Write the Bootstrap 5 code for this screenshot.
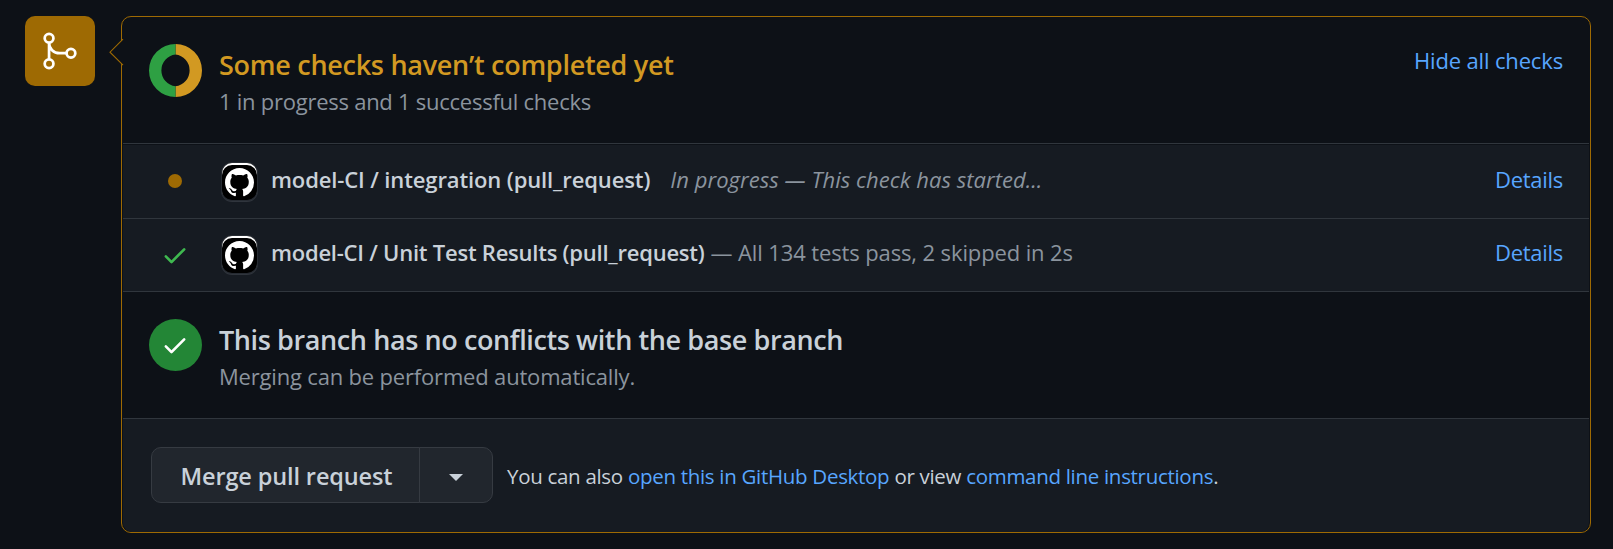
<!DOCTYPE html>
<html lang="en">
<head>
<meta charset="utf-8">
<meta name="viewport" content="width=device-width, initial-scale=1">
<title>Merge status</title>
<link href="https://cdn.jsdelivr.net/npm/bootstrap@5.3.0/dist/css/bootstrap.min.css" rel="stylesheet">
<style>
body{background:#0d1117;color:#c9d1d9;font-family:"Open Sans",sans-serif;font-size:22px;line-height:34px;white-space:nowrap;overflow:hidden}
a{color:#58a6ff;text-decoration:none}
svg{display:block;flex:none}
.timeline{padding:16px 22px 16px 25px;gap:26px}
.merge-badge{width:70px;height:70px;border-radius:10px;background:#9e6a03;padding:14px}
.merge-box{height:517px;border:1px solid #9e6a03;border-radius:10px;padding:0 1px 1px}
.pointer{position:absolute;left:-13px;top:21px}
.section-top{height:127px;border-bottom:1px solid #30363d;margin-bottom:1px;padding:26px 26px 0 26px}
.section-branch{height:127px;border-top:1px solid #30363d;padding:27px 26px 0 26px}
.section-foot{height:114px;border-top:1px solid #30363d;background:#161b22;border-radius:0 0 9px 9px;padding:28px 26px 0 28px}
.status-title{font-size:27px;line-height:38px;font-weight:600;margin:0}
.pending{color:#d29922}
.muted{color:#8b949e}
.status-text{margin-left:17px}
.ok-circle{width:53px;height:52px;background:#238636;border-radius:50%;padding:12px}
.check-row{background:#161b22;padding:17px 26px 0 25px;height:73px}
.check-row + .check-row{border-top:1px solid #30363d;padding-top:16px}
.state{width:53px;height:37px}
.dot{width:14px;height:14px;border-radius:50%;background:#9e6a03}
.avatar{width:35px;height:37px;margin:1px 14px 0 21px;border-radius:10px;background:#000;box-shadow:inset 0 2px 0 #fff,0 0 0 1px #262b32,0 1px 0 1px #30353d;padding:5px 3px 0}
.check-name{font-weight:600}
.merge-btn .btn{--bs-btn-color:#c9d1d9;--bs-btn-bg:#21262d;--bs-btn-border-color:#363b42;--bs-btn-hover-bg:#30363d;--bs-btn-hover-color:#c9d1d9;height:56px;border-radius:10px}
.merge-btn .main{width:269px;font-size:23.5px;line-height:34px;font-weight:600;letter-spacing:-.128px;padding:11px 0 9px 2px;border-top-right-radius:0;border-bottom-right-radius:0}
.merge-btn .more{width:74px;padding:4px 0 0;border-top-left-radius:0;border-bottom-left-radius:0}
.hint{font-size:20.5px;margin:1px 0 0 14px;letter-spacing:-.3px}
</style>
</head>
<body>
<main class="timeline d-flex align-items-start">
  <div class="merge-badge flex-shrink-0">
    <svg width="42" height="42" viewBox="0 0 24 24" fill="none" stroke="#fff" stroke-width="1.55"><circle cx="5.75" cy="4.75" r="2.5"/><circle cx="5.75" cy="19.25" r="2.5"/><circle cx="18.25" cy="13.25" r="2.5"/><path d="M5.75 7.25v9.5M5.75 7.25c0 3.5 2.6 6 6 6h4"/></svg>
  </div>
  <section class="merge-box position-relative flex-grow-1">
    <svg class="pointer" width="15" height="28" viewBox="0 0 15 28"><path d="M14 1.2 1 14.2l13 13z" fill="#0d1117"/><path d="M14 1.2 1 14.2l13 13" fill="none" stroke="#9e6a03" stroke-width="1.1"/></svg>

    <div class="section-top d-flex align-items-start">
      <svg width="53" height="54" viewBox="0 0 53 54"><path d="M26.5 1a26.5 26.5 0 0 1 0 53V43.2a15.9 15.9 0 0 0 0-31.6z" fill="#d29922"/><path d="M26.5 1a26.5 26.5 0 0 0 0 53V43.2a15.9 15.9 0 0 1 0-31.6z" fill="#2ea043"/></svg>
      <div class="status-text" style="padding-top:3px">
        <h3 class="status-title pending" style="letter-spacing:-.28px">Some checks haven’t completed yet</h3>
        <div class="muted" style="letter-spacing:-.254px">1 in progress and 1 successful checks</div>
      </div>
      <a href="#" class="ms-auto" style="letter-spacing:-.155px">Hide all checks</a>
    </div>

    <div class="check-row d-flex align-items-start">
      <div class="state d-flex align-items-center justify-content-center"><span class="dot"></span></div>
      <div class="avatar"><svg width="29" height="29" viewBox="0 0 16 16"><path fill="#fff" d="M8 0C3.58 0 0 3.58 0 8c0 3.54 2.29 6.53 5.47 7.59.4.07.55-.17.55-.38 0-.19-.01-.82-.01-1.49-2.01.37-2.53-.49-2.69-.94-.09-.23-.48-.94-.82-1.13-.28-.15-.68-.52-.01-.53.63-.01 1.08.58 1.23.82.72 1.21 1.87.87 2.33.66.07-.52.28-.87.51-1.07-1.78-.2-3.64-.89-3.64-3.95 0-.87.31-1.59.82-2.15-.08-.2-.36-1.02.08-2.12 0 0 .67-.21 2.2.82.64-.18 1.32-.27 2-.27s1.36.09 2 .27c1.53-1.04 2.2-.82 2.2-.82.44 1.1.16 1.92.08 2.12.51.56.82 1.27.82 2.15 0 3.07-1.87 3.75-3.65 3.95.29.25.54.73.54 1.48 0 1.07-.01 1.93-.01 2.2 0 .21.15.46.55.38A8.01 8.01 0 0 0 16 8c0-4.42-3.58-8-8-8z"/></svg></div>
      <span class="check-name" style="letter-spacing:-.12px">model-CI / integration (pull_request)</span>
      <em class="muted" style="margin-left:20px;letter-spacing:.03px">In progress — This check has started...</em>
      <a href="#" class="ms-auto" style="letter-spacing:-.283px">Details</a>
    </div>

    <div class="check-row d-flex align-items-start">
      <div class="state d-flex justify-content-center"><svg style="margin-top:6px" width="28" height="28" viewBox="0 0 16 16"><path fill="#3fb950" d="M13.78 4.22a.75.75 0 0 1 0 1.06l-7.25 7.25a.75.75 0 0 1-1.06 0L2.22 9.28a.75.75 0 0 1 1.06-1.06L6 10.94l6.72-6.72a.75.75 0 0 1 1.06 0z"/></svg></div>
      <div class="avatar"><svg width="29" height="29" viewBox="0 0 16 16"><path fill="#fff" d="M8 0C3.58 0 0 3.58 0 8c0 3.54 2.29 6.53 5.47 7.59.4.07.55-.17.55-.38 0-.19-.01-.82-.01-1.49-2.01.37-2.53-.49-2.69-.94-.09-.23-.48-.94-.82-1.13-.28-.15-.68-.52-.01-.53.63-.01 1.08.58 1.23.82.72 1.21 1.87.87 2.33.66.07-.52.28-.87.51-1.07-1.78-.2-3.64-.89-3.64-3.95 0-.87.31-1.59.82-2.15-.08-.2-.36-1.02.08-2.12 0 0 .67-.21 2.2.82.64-.18 1.32-.27 2-.27s1.36.09 2 .27c1.53-1.04 2.2-.82 2.2-.82.44 1.1.16 1.92.08 2.12.51.56.82 1.27.82 2.15 0 3.07-1.87 3.75-3.65 3.95.29.25.54.73.54 1.48 0 1.07-.01 1.93-.01 2.2 0 .21.15.46.55.38A8.01 8.01 0 0 0 16 8c0-4.42-3.58-8-8-8z"/></svg></div>
      <span class="check-name" style="letter-spacing:-.235px">model-CI / Unit Test Results (pull_request)</span>
      <span class="muted" style="margin-left:6px;letter-spacing:-.12px">— All 134 tests pass, 2 skipped in 2s</span>
      <a href="#" class="ms-auto" style="letter-spacing:-.283px">Details</a>
    </div>

    <div class="section-branch d-flex align-items-start">
      <div class="ok-circle"><svg width="28" height="28" viewBox="0 0 16 16"><path fill="#fff" d="M13.78 4.22a.75.75 0 0 1 0 1.06l-7.25 7.25a.75.75 0 0 1-1.06 0L2.22 9.28a.75.75 0 0 1 1.06-1.06L6 10.94l6.72-6.72a.75.75 0 0 1 1.06 0z"/></svg></div>
      <div class="status-text" style="padding-top:2px">
        <h3 class="status-title" style="letter-spacing:-.398px">This branch has no conflicts with the base branch</h3>
        <div class="muted" style="letter-spacing:-.181px">Merging can be performed automatically.</div>
      </div>
    </div>

    <div class="section-foot d-flex align-items-start">
      <div class="d-flex align-items-center">
        <div class="btn-group merge-btn">
          <button type="button" class="btn main">Merge pull request</button>
          <button type="button" class="btn more" aria-label="Select merge method"><svg class="mx-auto" width="14" height="7" viewBox="0 0 14 7"><path d="M0 0h14L7 7z" fill="#c9d1d9"/></svg></button>
        </div>
        <div class="hint">You can also <a href="#">open this in GitHub Desktop</a> or view <a href="#">command line instructions</a>.</div>
      </div>
    </div>
  </section>
</main>
<script src="https://cdn.jsdelivr.net/npm/bootstrap@5.3.0/dist/js/bootstrap.bundle.min.js"></script>
</body>
</html>
